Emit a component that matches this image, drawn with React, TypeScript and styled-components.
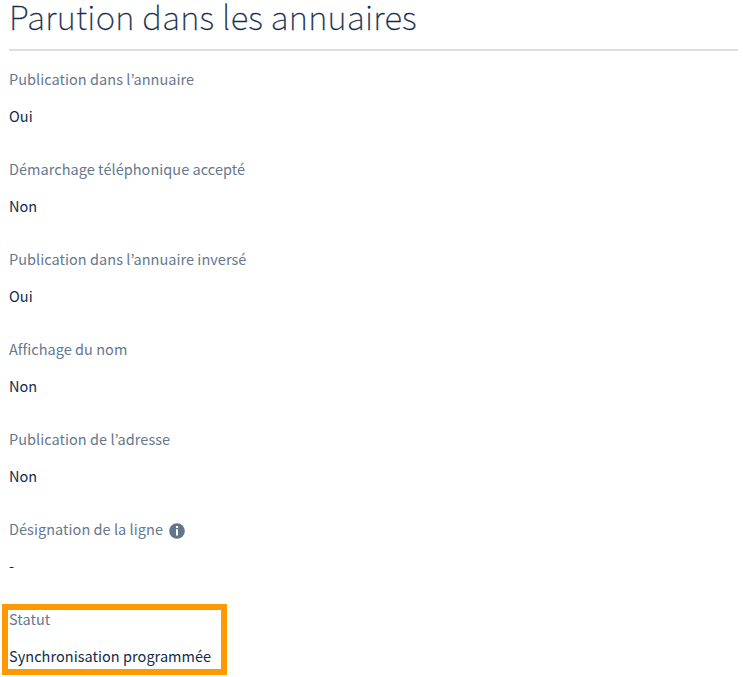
import React from "react";
import styled, { createGlobalStyle } from "styled-components";

const GlobalStyle = createGlobalStyle`
  body { margin: 0; background: #fff; }
  *, *::after { box-sizing: border-box; }
`;

const Page = styled.main`
  width: 743px;
  height: 677px;
  padding: 0 5px 0 9px;
  font-family: "Noto Sans CJK KR", "Noto Sans", sans-serif;
  color: #122b4b;
`;

const Title = styled.h1`
  margin: 0 0 9px;
  height: 51px;
  border-bottom: 2px solid #dfdfdf;
  font-family: "Noto Sans CJK KR Thin", "Noto Sans CJK KR", sans-serif;
  font-size: 33px;
  font-weight: 100;
  letter-spacing: 0.29px;
  -webkit-text-stroke: 0.3px currentColor;
  line-height: 33px;
  white-space: nowrap;
`;

const List = styled.dl`
  margin: 0;
  display: flex;
  flex-direction: column;
`;

const Field = styled.div<{ $marked?: boolean }>`
  position: relative;
  height: ${(p) => (p.$marked ? 76 : 90)}px;
  font-size: 14.5px;
  letter-spacing: 0.04px;
  &::after {
    content: ${(p) => (p.$marked ? '""' : "none")};
    position: absolute;
    left: -7px;
    top: 4px;
    width: 225px;
    height: 71px;
    border: 6px solid #ff9900;
  }
`;

const Label = styled.dt`
  display: flex;
  align-items: center;
  height: 37px;
  line-height: 37px;
  color: #66788e;
  white-space: nowrap;
`;

const Value = styled.dd`
  margin: 0;
  height: 37px;
  line-height: 37px;
  white-space: nowrap;
`;

const Info = styled.svg`
  width: 16px;
  height: 16px;
  margin: 5px 0 0 6px;
`;

const fields = [
  { label: "Publication dans l’annuaire", value: "Oui" },
  { label: "Démarchage téléphonique accepté", value: "Non" },
  { label: "Publication dans l’annuaire inversé", value: "Oui" },
  { label: "Affichage du nom", value: "Non" },
  { label: "Publication de l’adresse", value: "Non" },
  { label: "Désignation de la ligne", value: "-", info: true },
  { label: "Statut", value: "Synchronisation programmée", marked: true },
];

export default function App() {
  return (
    <Page>
      <GlobalStyle />
      <Title>Parution dans les annuaires</Title>
      <List>
        {fields.map((f) => (
          <Field key={f.label} $marked={f.marked}>
            <Label>
              {f.label}
              {f.info && (
                <Info viewBox="0 0 16 16" aria-hidden="true">
                  <circle cx="8" cy="8" r="7.8" fill="#63758b" />
                  <path d="M7 3h2v2H7zM7 6.2h2v6.3H7z" fill="#fff" />
                </Info>
              )}
            </Label>
            <Value>{f.value}</Value>
          </Field>
        ))}
      </List>
    </Page>
  );
}
